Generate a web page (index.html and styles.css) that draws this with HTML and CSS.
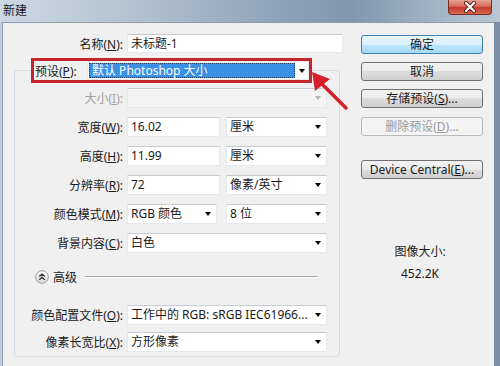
FILE: index.html
```html
<!DOCTYPE html>
<html lang="zh-CN">
<head>
  <meta charset="UTF-8">
  <title>新建</title>
  <link rel="stylesheet" href="styles.css">
</head>
<body>
  <div class="window">
    <!-- 标题栏 -->
    <div class="titlebar">
      <span class="title">新建</span>
      <button class="close-btn">
        <svg width="18" height="12" viewBox="0 0 18 12">
          <path d="M5 2 L13 10 M13 2 L5 10" stroke="#5a1a16" stroke-width="4" stroke-linecap="round"/>
          <path d="M5 2 L13 10 M13 2 L5 10" stroke="#fff" stroke-width="2.2" stroke-linecap="round"/>
        </svg>
      </button>
    </div>

    <div class="dialog">
      <div class="form">
        <div class="row name-row">
          <span class="lbl">名称(<u>N</u>):</span>
          <div class="field name-field">未标题-1</div>
        </div>

        <fieldset class="group">
          <legend class="preset">
            <span class="preset-lbl">预设(<u>P</u>):</span>
            <div class="preset-select">
              <span class="preset-text">默认 Photoshop 大小</span>
              <span class="caret"></span>
            </div>
          </legend>

          <div class="rows">
            <div class="row">
              <span class="lbl disabled">大小(<u>I</u>):</span>
              <div class="select wide off"><span class="sel-text"></span><span class="caret"></span></div>
            </div>
            <div class="row">
              <span class="lbl">宽度(<u>W</u>):</span>
              <div class="field num">16.02</div>
              <div class="select unit"><span class="sel-text">厘米</span><span class="caret"></span></div>
            </div>
            <div class="row">
              <span class="lbl">高度(<u>H</u>):</span>
              <div class="field num">11.99</div>
              <div class="select unit"><span class="sel-text">厘米</span><span class="caret"></span></div>
            </div>
            <div class="row">
              <span class="lbl">分辨率(<u>R</u>):</span>
              <div class="field num">72</div>
              <div class="select unit"><span class="sel-text">像素/英寸</span><span class="caret"></span></div>
            </div>
            <div class="row">
              <span class="lbl">颜色模式(<u>M</u>):</span>
              <div class="select mode"><span class="sel-text">RGB 颜色</span><span class="caret"></span></div>
              <div class="select unit bits"><span class="sel-text">8 位</span><span class="caret"></span></div>
            </div>
            <div class="row">
              <span class="lbl">背景内容(<u>C</u>):</span>
              <div class="select wide"><span class="sel-text">白色</span><span class="caret"></span></div>
            </div>
          </div>

          <!-- 高级 -->
          <div class="adv">
            <svg class="adv-icon" width="14" height="14" viewBox="0 0 14 14">
              <defs>
                <linearGradient id="g" x1="0" y1="0" x2="0" y2="1">
                  <stop offset="0" stop-color="#ffffff"/>
                  <stop offset="1" stop-color="#dcdcdc"/>
                </linearGradient>
              </defs>
              <circle cx="7" cy="7" r="6.3" fill="url(#g)" stroke="#9a9a9a"/>
              <path d="M4.2 6.6 L7 4.2 L9.8 6.6 M4.2 9.8 L7 7.4 L9.8 9.8" fill="none" stroke="#333" stroke-width="1.3"/>
            </svg>
            <span>高级</span>
            <span class="adv-line"></span>
          </div>

          <div class="rows adv-rows">
            <div class="row">
              <span class="lbl">颜色配置文件(<u>O</u>):</span>
              <div class="select wide"><span class="sel-text">工作中的 RGB: sRGB IEC61966...</span><span class="caret"></span></div>
            </div>
            <div class="row">
              <span class="lbl">像素长宽比(<u>X</u>):</span>
              <div class="select wide"><span class="sel-text">方形像素</span><span class="caret"></span></div>
            </div>
          </div>
        </fieldset>
      </div>

      <!-- 右侧按钮 -->
      <div class="side">
        <button class="btn btn-default">确定</button>
        <button class="btn">取消</button>
        <button class="btn">存储预设(<u>S</u>)...</button>
        <button class="btn btn-disabled">删除预设(<u>D</u>)...</button>
        <button class="btn btn-device">Device Central(<u>E</u>)...</button>
        <div class="size-info">
          <div>图像大小:</div>
          <div>452.2K</div>
        </div>
      </div>
    </div>

    <!-- 标注箭头 -->
    <svg class="arrow" width="500" height="366" viewBox="0 0 500 366">
      <path d="M323 85 L346 108" stroke="#d4202a" stroke-width="3.5" stroke-linecap="round"/>
      <path d="M312 72 L315 91 L330 79 Z" fill="#d4202a"/>
    </svg>
  </div>
</body>
</html>
```

FILE: styles.css
```css
body {
  margin: 0;
  width: 500px;
  height: 366px;
  overflow: hidden;
  font-family: "Noto Sans", "Noto Sans CJK SC", sans-serif;
  font-size: 12px;
  color: #1b1b1b;
}
.window {
  position: relative;
  width: 500px;
  height: 366px;
  background: linear-gradient(to right, #c3d0dc 0%, #aebfcf 40%, #8aa0b6 75%, #7b8ea6 100%);
}

/* 标题栏 */
.titlebar {
  height: 22px;
  display: flex;
  justify-content: space-between;
  align-items: flex-start;
  background: linear-gradient(to right, #cdd8e3 0%, #b4c4d3 25%, #8ea4ba 55%, #7f96ad 70%, #a3b6c8 88%, #b9c7d5 100%);
}
.title {
  padding-left: 3px;
  line-height: 22px;
  color: #1a1a1a;
}
.close-btn {
  width: 44px;
  height: 15px;
  margin-right: 8px;
  padding: 0;
  border: 1px solid #7b2a24;
  border-top: none;
  border-radius: 0 0 4px 4px;
  background: linear-gradient(#e7a196 0%, #d46a5d 45%, #c2392b 55%, #d86b52 100%);
  display: flex;
  align-items: center;
  justify-content: center;
}

/* 对话框主体 */
.dialog {
  display: flex;
  height: 344px;
  margin: 0 6px 0 2px;
  background: #f0f0f0;
  border-top: 1px solid #8d9cad;
  border-left: 1px solid #8d9cad;
  box-sizing: border-box;
}
.form {
  width: 340px;
  padding-top: 11px;
}
.row {
  display: flex;
  align-items: center;
  gap: 4px;
  height: 20px;
}
.name-row {
  height: 19px;
}
.lbl {
  width: 108px;
  text-align: right;
  white-space: nowrap;
}
.name-row .lbl {
  width: 120px;
}
.lbl.disabled {
  color: #a0a0a0;
}

/* 输入框和下拉框 */
.field,
.select {
  height: 20px;
  box-sizing: border-box;
  background: #fff;
  border: 1px solid #e3e9ef;
  border-top-color: #c5cbd2;
  line-height: 18px;
  padding-left: 3px;
  white-space: nowrap;
  overflow: hidden;
}
.name-field {
  width: 216px;
  height: 19px;
  line-height: 17px;
}
.field.num {
  width: 93px;
}
.select {
  display: flex;
  align-items: center;
}
.sel-text {
  flex: 1;
  overflow: hidden;
}
.select.wide {
  width: 200px;
}
.select.unit {
  width: 101px;
  margin-left: 2px;
}
.select.mode {
  width: 90px;
}
.select.bits {
  margin-left: 5px;
}
.select.off {
  background: #f4f4f4;
}
.caret {
  width: 0;
  height: 0;
  border-left: 3px solid transparent;
  border-right: 3px solid transparent;
  border-top: 4px solid #000;
  margin: 0 5px 0 4px;
}
.select.off .caret {
  border-top-color: #b5b5b5;
}

/* 预设分组框 */
.group {
  width: 326px;
  min-width: 0;
  box-sizing: border-box;
  margin: 5px 0 0 11px;
  padding: 5px 0 4px 0;
  border: 1px solid #d5dbe0;
  border-radius: 3px;
}
.preset {
  display: flex;
  align-items: center;
  width: 281px;
  height: 25px;
  box-sizing: border-box;
  margin-left: 16px;
  padding: 0;
  border: 3px solid #c4242c;
}
.preset-lbl {
  width: 52px;
  padding-left: 1px;
  white-space: nowrap;
}
.preset-select {
  width: 222px;
  height: 19px;
  box-sizing: border-box;
  display: flex;
  align-items: center;
  background: #fff;
  border: 1px solid #e3e9ef;
}
.preset-text {
  width: 206px;
  height: 15px;
  box-sizing: border-box;
  margin-left: 1px;
  padding-left: 2px;
  line-height: 13px;
  color: #fff;
  background: #3a8fe6;
  border: 1px dotted #1c3f6a;
  white-space: nowrap;
}
.preset-select .caret {
  margin: 0 2px 0 4px;
}

.rows {
  display: flex;
  flex-direction: column;
  gap: 9px;
}
.adv {
  display: flex;
  align-items: center;
  gap: 4px;
  height: 14px;
  margin: 17px 21px 0 20px;
}
.adv-line {
  flex: 1;
  margin-left: 4px;
  border-top: 1px solid #a8a8a8;
  border-bottom: 1px solid #fff;
}
.adv-rows {
  gap: 7px;
  margin-top: 21px;
}

/* 右侧按钮 */
.side {
  width: 122px;
  margin-left: 18px;
  padding-top: 12px;
  display: flex;
  flex-direction: column;
  gap: 8px;
}
.btn {
  height: 19px;
  padding: 0;
  font: inherit;
  line-height: 17px;
  color: #1b1b1b;
  border: 1px solid #707070;
  border-radius: 3px;
  background: linear-gradient(#f2f2f2 0%, #ebebeb 50%, #dddddd 50%, #cfcfcf 100%);
  white-space: nowrap;
}
.btn-default {
  border-color: #3c7fb1;
  background: linear-gradient(#eaf6fd 0%, #d9f0fc 50%, #bee6fd 50%, #a7d9f5 100%);
}
.btn-disabled {
  margin-top: 1px;
  color: #9a9a9a;
  border-color: #b8bcbf;
  background: #f4f4f4;
}
.btn-device {
  margin-top: 16px;
}
.size-info {
  margin-top: 54px;
  padding-right: 4px;
  text-align: center;
  line-height: 22px;
}

/* 标注 */
.arrow {
  position: absolute;
  left: 0;
  top: 0;
  pointer-events: none;
}
```
